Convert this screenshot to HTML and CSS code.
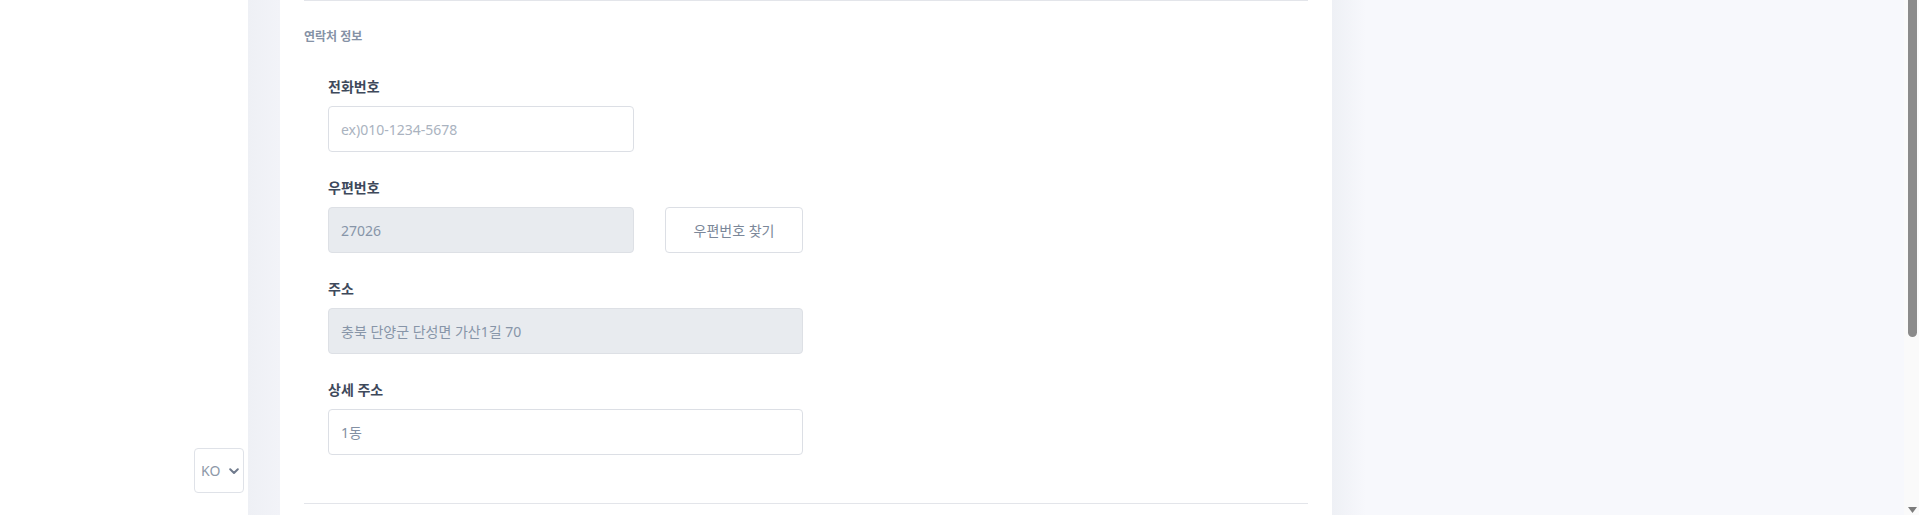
FILE: index.html
```html
<!DOCTYPE html>
<html lang="ko">
<head>
<meta charset="utf-8">
<title>연락처 정보</title>
<link rel="stylesheet" href="styles.css">
</head>
<body>
<div class="layout">
  <aside class="sidebar">
    <div class="lang-select">
      <span class="lang-text">KO</span>
      <svg class="chev" width="10" height="7" viewBox="0 0 10 7"><path d="M1.2 1.3 L5 5 L8.8 1.3" fill="none" stroke="#6f7a8c" stroke-width="2" stroke-linecap="round" stroke-linejoin="round"/></svg>
    </div>
  </aside>
  <main class="main">
    <div class="gutter"></div>
    <section class="card">
      <div class="divider"></div>
      <div class="section-body">
        <div class="section-title">연락처 정보</div>
        <div class="fields">
          <div class="field">
            <label class="label">전화번호</label>
            <input class="input w-short" type="text" placeholder="ex)010-1234-5678">
          </div>
          <div class="field">
            <label class="label">우편번호</label>
            <div class="row">
              <input class="input w-short disabled" type="text" value="27026" disabled>
              <button class="btn" type="button">우편번호 찾기</button>
            </div>
          </div>
          <div class="field">
            <label class="label">주소</label>
            <input class="input w-long disabled" type="text" value="충북 단양군 단성면 가산1길 70" disabled>
          </div>
          <div class="field">
            <label class="label">상세 주소</label>
            <input class="input w-long" type="text" value="1동">
          </div>
        </div>
      </div>
      <div class="divider"></div>
    </section>
    <div class="side-panel"></div>
  </main>
  <div class="scrollbar">
    <div class="thumb"></div>
    <div class="track"></div>
    <svg class="arrow" width="9" height="6" viewBox="0 0 9 6"><path d="M0 0 H9 L4.5 6 Z" fill="#7c7c7c"/></svg>
  </div>
</div>
</body>
</html>
```
FILE: styles.css
```css
* { box-sizing: border-box; }
html, body { margin: 0; padding: 0; height: 100%; overflow: hidden; }
body {
  font-family: "Noto Sans", "Noto Sans CJK KR", sans-serif;
  background: #ffffff;
  color: #3d4757;
}
.layout {
  display: flex;
  height: 515px;
}
.sidebar {
  width: 248px;
  flex: none;
  background: #ffffff;
  display: flex;
  flex-direction: column;
  justify-content: flex-end;
  align-items: flex-end;
  padding: 0 4px 22px 0;
}
.lang-select {
  width: 50px;
  height: 45px;
  border: 1px solid #dfe2e8;
  border-radius: 4px;
  background: #fff;
  display: flex;
  align-items: center;
  padding-left: 6px;
  gap: 9px;
}
.lang-text {
  font-size: 14px;
  color: #8d98a8;
  line-height: 1;
}
.chev { display: block; margin-top: 1px; }
.main {
  flex: 1;
  display: flex;
  min-width: 0;
}
.gutter {
  width: 32px;
  flex: none;
  background: linear-gradient(to right, #eef0f5, #f2f3f8);
}
.card {
  width: 1052px;
  flex: none;
  background: #ffffff;
  padding: 0 24px;
  display: flex;
  flex-direction: column;
}
.divider {
  height: 1px;
  background: #e3e5ea;
  flex: none;
}
.section-body {
  padding: 27px 0 22px 0;
}
.section-title {
  font-size: 12px;
  line-height: 18px;
  font-weight: 600;
  color: #8592a6;
}
.fields {
  padding: 31px 0 0 24px;
  display: flex;
  flex-direction: column;
}
.field {
  display: flex;
  flex-direction: column;
  margin-bottom: 26px;
}
.label {
  font-size: 14px;
  line-height: 20px;
  font-weight: 700;
  color: #3e495b;
  margin-bottom: 9px;
}
.row {
  display: flex;
  gap: 31px;
}
.input {
  height: 46px;
  border: 1px solid #dcdfe5;
  border-radius: 4px;
  background: #ffffff;
  padding: 0 12px;
  font-family: "Noto Sans", "Noto Sans CJK KR", sans-serif;
  font-size: 14px;
  color: #8390a3;
  outline: none;
}
.input::placeholder { color: #aab3c0; }
.input.disabled {
  background: #e8ebef;
  border-color: #dde0e5;
  color: #8795a8;
  -webkit-text-fill-color: #8795a8;
  opacity: 1;
}
.w-short { width: 306px; }
.w-long { width: 475px; }
.btn {
  width: 138px;
  height: 46px;
  border: 1px solid #dcdfe5;
  border-radius: 4px;
  background: #ffffff;
  font-family: "Noto Sans", "Noto Sans CJK KR", sans-serif;
  font-size: 14px;
  color: #7b8799;
  padding: 0;
}
.side-panel {
  flex: 1;
  background: linear-gradient(to right, #eef0f5 0px, #f7f8fc 34px, #f7f8fc 100%);
}
.scrollbar {
  width: 15px;
  flex: none;
  background: #fafafa;
  display: flex;
  flex-direction: column;
  align-items: center;
  padding-bottom: 2px;
}
.thumb {
  width: 9px;
  height: 337px;
  background: #8b8b8b;
  border-radius: 0 0 5px 5px;
  margin-left: 2px;
  flex: none;
}
.track { flex: 1; }
.arrow { display: block; margin-left: 1px; }
```
